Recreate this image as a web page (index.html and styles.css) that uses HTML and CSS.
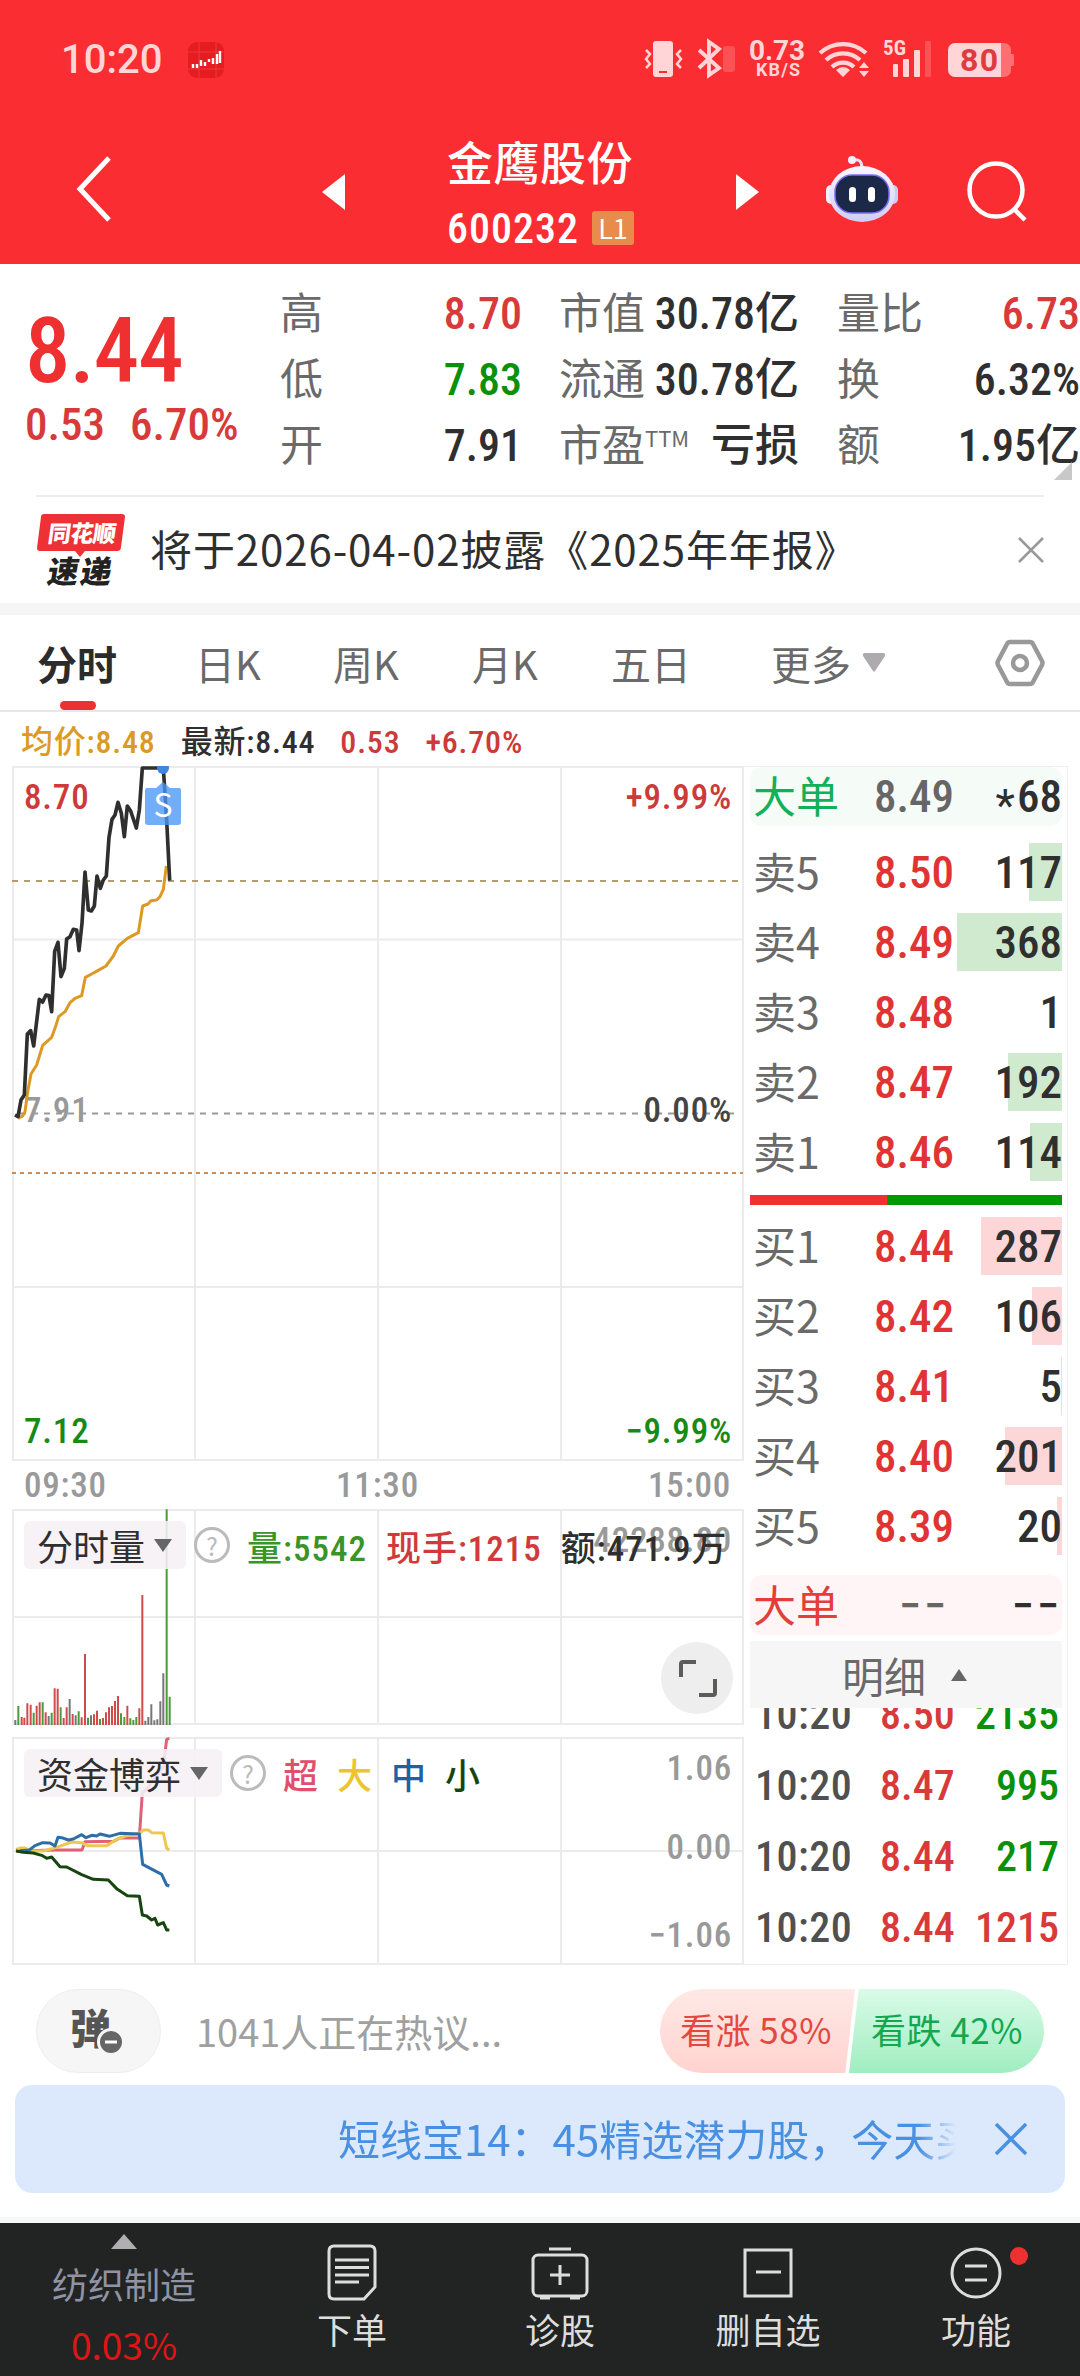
FILE: index.html
```html
<!DOCTYPE html>
<html lang="zh-CN">
<head>
    <title>金鹰股份 600232</title>
    <meta charset="UTF-8">
    <link rel="stylesheet" href="styles.css">
</head>
<body>

    <header>
        <div class="status">
            <span class="clock">10:20</span>
            <svg class="app-icon" width="36" height="36" viewBox="0 0 36 36">
                <rect width="36" height="36" rx="9" fill="#e51c20"/>
                <path d="M0 10H36M0 27H36M11 0V36M28 0V36" stroke="#ee3a3c" stroke-width="1"/>
                <path d="M5 22v4M9 22v4M13 18v6M17 20v4M21 17v3M25 16v6M29 12v10M32 9v12" stroke="#fff" stroke-width="2.4"/>
            </svg>
            <svg class="status-icons" width="380" height="46" viewBox="640 36 380 46" fill="#ffd5d7">
                <rect x="653" y="41" width="20" height="36" rx="3"/>
                <rect x="659" y="71" width="8" height="2" fill="#fa2d32"/>
                <path d="M646 50l4 4-4 5 4 5-4 4M681 50l-4 4 4 5-4 5 4 4" fill="none" stroke="#ffd5d7" stroke-width="2.5"/>
                <path d="M699 50l20 18-10 7V42l10 7-20 19" fill="none" stroke="#ffd5d7" stroke-width="3.8"/>
                <rect x="723" y="46" width="12" height="26" rx="3" opacity=".22"/>
                <text x="749" y="60" class="speed" textLength="56">0.73</text>
                <text x="756" y="76" class="unit" textLength="44">KB/S</text>
                <g fill="none" stroke="#ffd5d7" stroke-width="4.2">
                    <path d="M820 53a34 34 0 0 1 46 0"/>
                    <path d="M826 60a25 25 0 0 1 34 0"/>
                    <path d="M832 67a16 16 0 0 1 22 0"/>
                </g>
                <path d="M836 70q7-6 14 0l-7 7zM859 68l5-6 5 6zM859 71h10l-5 6z"/>
                <text x="883" y="55" class="net" textLength="23">5G</text>
                <rect x="893" y="64" width="5" height="13" rx="1"/>
                <rect x="903" y="59" width="6" height="18" rx="1"/>
                <rect x="914" y="50" width="6" height="27" rx="1"/>
                <rect x="925" y="41" width="6" height="36" rx="1" opacity=".22"/>
                <path d="M955 43h46v34h-46a7 7 0 0 1-7-7V50a7 7 0 0 1 7-7z"/>
                <path d="M1001 43h3a7 7 0 0 1 7 7v4h2q1 0 1 2v8q0 2-1 2h-2v4a7 7 0 0 1-7 7h-3z" opacity=".4"/>
                <text x="960" y="71" class="battery" textLength="38">80</text>
            </svg>
        </div>
        <div class="titlebar">
            <svg class="back" width="36" height="66" viewBox="0 0 36 66"><path d="M33 2L4 33l29 31" fill="none" stroke="#fff" stroke-width="5"/></svg>
            <svg class="prev" width="23" height="36" viewBox="0 0 23 36"><path d="M23 0v36L0 18z" fill="#fff"/></svg>
            <div class="stock">
                <div class="name">金鹰股份</div>
                <div class="code">600232 <span class="level">L1</span></div>
            </div>
            <svg class="next" width="23" height="36" viewBox="0 0 23 36"><path d="M0 0v36l23-18z" fill="#fff"/></svg>
            <svg class="robot" width="72" height="68" viewBox="825 155 72 68">
                <defs>
                    <linearGradient id="shell" x1="0" y1="0" x2="0" y2="1"><stop offset="0" stop-color="#fbf8ff"/><stop offset="1" stop-color="#cfcdf6"/></linearGradient>
                </defs>
                <path d="M852 160q9-2 9 8" fill="none" stroke="#eadff5" stroke-width="3"/>
                <circle cx="851" cy="160" r="4" fill="#f6eefc"/>
                <rect x="825" y="185" width="12" height="19" rx="5" fill="#f3f0ff"/>
                <rect x="885" y="185" width="12" height="19" rx="5" fill="#c9cdf6"/>
                <ellipse cx="861" cy="194" rx="33" ry="28" fill="url(#shell)"/>
                <rect x="834" y="175" width="54" height="38" rx="17" fill="#1c2848" stroke="#7a6df0" stroke-width="1.5"/>
                <rect x="848" y="187" width="7" height="15" rx="3.5" fill="#fff"/>
                <rect x="867" y="187" width="7" height="15" rx="3.5" fill="#fff"/>
            </svg>
            <svg class="search" width="62" height="62" viewBox="964 160 62 62"><circle cx="995" cy="190" r="26.5" fill="none" stroke="#fff" stroke-width="4.5"/><path d="M1013 209l11 11" stroke="#fff" stroke-width="4.5"/></svg>
        </div>
    </header>

    <section class="quote">
        <div class="last">
            <div class="price">8.44</div>
            <div class="change"><span>0.53</span><span>6.70%</span></div>
        </div>
        <dl class="col c1">
            <dt>高</dt><dd class="up">8.70</dd>
            <dt>低</dt><dd class="down">7.83</dd>
            <dt>开</dt><dd>7.91</dd>
        </dl>
        <dl class="col c2">
            <dt>市值</dt><dd>30.78亿</dd>
            <dt>流通</dt><dd>30.78亿</dd>
            <dt>市盈<sup>TTM</sup></dt><dd>亏损</dd>
        </dl>
        <dl class="col c3">
            <dt>量比</dt><dd class="up">6.73</dd>
            <dt>换</dt><dd>6.32%</dd>
            <dt>额</dt><dd>1.95亿</dd>
        </dl>
        <i class="corner"></i>
    </section>

    <section class="news">
        <svg width="90" height="74" viewBox="36 512 90 74">
            <path d="M44 513h78q3 0 3 3l-4 30q0 4-4 4H85l-5 6-5-6H40q-3 0-3-3l4-31q0-3 3-3z" fill="#ee3135"/>
            <text x="0" y="0" class="brand" transform="translate(47 541) skewX(-8)" textLength="68">同花顺</text>
            <text x="0" y="0" class="express" transform="translate(46 582) skewX(-10)" textLength="64">速递</text>
        </svg>
        <p>将于2026-04-02披露《2025年年报》</p>
        <svg width="26" height="26" viewBox="0 0 26 26"><path d="M1 1l24 24M25 1L1 25" stroke="#999" stroke-width="2.5"/></svg>
    </section>

    <nav class="tabs">
        <a class="active">分时</a>
        <a>日K</a>
        <a>周K</a>
        <a>月K</a>
        <a>五日</a>
        <a>更多</a>
        <svg class="more" width="24" height="19" viewBox="0 0 24 19"><path d="M2 0h20q2 1 1 3L13 18q-1 1-2 0L1 3q-1-2 1-3z" fill="#aeaaae"/></svg>
        <svg class="gear" width="50" height="48" viewBox="0 0 50 48" fill="none" stroke="#999" stroke-width="4.5"><path d="M15 3h20q2 0 3 2l9 17q1 2 0 4l-9 17q-1 2-3 2H15q-2 0-3-2L3 26q-1-2 0-4l9-17q1-2 3-2z"/><circle cx="25" cy="24" r="7"/></svg>
    </nav>

    <div class="summary">
        <span class="avg">均价:8.48</span>
        <span>最新:8.44</span>
        <span class="rise">0.53</span>
        <span class="rise">+6.70%</span>
    </div>

    <main>
        <div class="charts">
            <!-- price -->
            <svg class="chart" width="744" height="695" viewBox="0 766 744 695">
                <path class="grid" d="M12 767H743M12 939.5H743M12 1287H743M12 1460H743M13 766V1461M195 766V1461M378 766V1461M561 766V1461M743 766V1461"/>
                <path d="M12 881H738" stroke="#b79c70" stroke-width="2" stroke-dasharray="6 6"/>
                <path d="M20 1113.500H738" stroke="#999" stroke-width="2" stroke-dasharray="6 6"/>
                <path d="M12 1173H743" stroke="#d98a4a" stroke-width="2" stroke-dasharray="4 4"/>
                <text x="24" y="1122" class="axis">7.91</text>
                <g transform="translate(0 750) scale(.33333)" fill="none" stroke-linejoin="round">
                    <polyline stroke="#dc9a24" stroke-width="9" points="54,1105 68,1098 75,1085 84,1020 93,972 110,945 128,886 155,862 165,835 176,800 195,785 210,758 225,745 245,737 256,682 275,672 300,658 318,648 340,618 355,588 382,565 415,548 428,468 444,462 453,452 470,450 480,440 490,418 499,348"/>
                    <polyline stroke="#2f2f2f" stroke-width="11" points="45,1095 54,1100 63,1050 73,1035 82,852 92,842 101,888 118,748 128,756 138,735 147,737 155,785 164,604 174,577 183,680 193,655 200,567 210,560 220,538 230,540 237,602 246,520 255,366 265,480 274,483 283,468 291,378 301,415 310,390 319,378 327,262 336,208 345,195 354,157 364,190 373,260 382,168 392,183 409,234 418,180 427,54 490,54 500,210 509,392"/>
                </g>
                <circle cx="163" cy="768" r="6" fill="#3f86e0"/>
                <path d="M147 788h9l7-6 7 6h9q2 0 2 2v32q0 3-3 3h-30q-3 0-3-3v-32q0-2 2-2z" fill="#4a96f5" opacity=".78"/>
                <text x="163" y="817" class="sell">S</text>
                <text x="24" y="809" class="axis red">8.70</text>
                <text x="24" y="1443" class="axis green">7.12</text>
                <text x="732" y="809" class="axis red end">+9.99%</text>
                <text x="732" y="1122" class="axis dark end">0.00%</text>
                <text x="732" y="1443" class="axis green end">−9.99%</text>
            </svg>
            <div class="times"><span>09:30</span><span>11:30</span><span>15:00</span></div>

            <!-- volume -->
            <div class="pane">
                <svg class="chart" width="744" height="216" viewBox="0 1509 744 216">
                    <path class="grid" d="M12 1510H743M12 1617H743M12 1724H743M13 1509V1725M195 1509V1725M378 1509V1725M561 1509V1725M743 1509V1725"/>
                    <g transform="translate(0 1480) scale(.33333)" stroke-width="6">
                        <path stroke="#777" d="M46 735V720M146 735V708M209 735V657M227 735V706M273 735V706M436 735V722M445 735V711M454 735V673M463 735V721M472 735V718M481 735V664M490 735V580"/>
                        <path stroke="#4c9a3c" d="M55 735V678M101 735V698M128 735V667M155 735V698M182 735V682M236 735V694M264 735V713M300 735V717M363 735V700M373 735V711M391 735V715M400 735V720M409 735V711M500 735V88M509 735V650"/>
                        <path stroke="#cf4c4c" d="M65 735V711M73 735V713M82 735V670M92 735V674M110 735V677M119 735V667M137 735V697M164 735V625M173 735V626M191 735V714M200 735V682M218 735V702M245 735V712M255 735V522M282 735V703M291 735V692M309 735V714M318 735V697M327 735V682M336 735V678M345 735V663M354 735V648M382 735V677M418 735V685M427 735V345"/>
                    </g>
                    <text x="732" y="1552" class="axis end">42288.80</text>
                </svg>
                <div class="legend">
                    <span class="pick">分时量<i></i></span>
                    <span class="help">?</span>
                    <span class="vol">量:5542</span>
                    <span class="hand">现手:1215</span>
                    <span class="amount">额:471.9万</span>
                </div>
                <svg class="full" width="72" height="72" viewBox="0 0 72 72"><circle cx="36" cy="36" r="36" fill="#eee"/><path d="M20 35V22q0-2 2-2h13M54 37v14q0 2-2 2H38" fill="none" stroke="#5c5c58" stroke-width="4"/></svg>
            </div>

            <!-- money flow -->
            <div class="pane flow">
                <svg class="chart" width="744" height="228" viewBox="0 1737 744 228">
                    <path class="grid" d="M12 1738H743M12 1851H743M12 1964H743M13 1737V1965M195 1737V1965M378 1737V1965M561 1737V1965M743 1737V1965"/>
                    <g transform="translate(0 1480) scale(.33333)" fill="none" stroke-width="9" stroke-linejoin="round">
                        <polyline stroke="#e0607a" points="48,1108 90,1112 160,1110 246,1110 255,1085 340,1084 360,1074 418,1074 427,938 445,922 490,860 500,778 508,775"/>
                        <polyline stroke="#ecc94e" points="48,1110 60,1104 75,1104 90,1112 130,1113 170,1102 215,1086 245,1088 262,1097 320,1097 350,1078 380,1067 418,1060 430,1050 445,1050 455,1058 490,1059 500,1105 508,1110"/>
                        <polyline stroke="#2e6da8" points="60,1112 88,1110 105,1097 128,1088 150,1089 165,1098 174,1072 185,1073 205,1080 220,1077 245,1064 258,1073 275,1066 290,1068 300,1062 328,1069 360,1060 418,1062 428,1153 485,1183 500,1215 508,1218"/>
                        <polyline stroke="#16450f" points="48,1113 70,1117 100,1119 125,1126 140,1135 155,1131 180,1160 200,1161 245,1184 280,1198 325,1200 350,1226 382,1247 418,1249 427,1305 440,1308 455,1320 465,1315 473,1335 490,1328 500,1350 508,1350"/>
                    </g>
                    <text x="732" y="1780" class="axis end">1.06</text>
                    <text x="732" y="1859" class="axis end">0.00</text>
                    <text x="732" y="1947" class="axis end">−1.06</text>
                </svg>
                <div class="legend">
                    <span class="pick">资金博弈<i></i></span>
                    <span class="help">?</span>
                    <span class="xl">超</span>
                    <span class="l">大</span>
                    <span class="m">中</span>
                    <span class="s">小</span>
                </div>
            </div>
        </div>

        <aside class="book">
            <div class="big sell-side"><b>大单</b><em>8.49</em><span><i class="star">*</i>68</span></div>
            <ul>
                <li><b>卖5</b><em>8.50</em><span>117</span><i class="bar" style="width:33px"></i></li>
                <li><b>卖4</b><em>8.49</em><span>368</span><i class="bar" style="width:105px"></i></li>
                <li><b>卖3</b><em>8.48</em><span>1</span></li>
                <li><b>卖2</b><em>8.47</em><span>192</span><i class="bar" style="width:54px"></i></li>
                <li><b>卖1</b><em>8.46</em><span>114</span><i class="bar" style="width:32px"></i></li>
            </ul>
            <div class="ratio"></div>
            <ul class="bids">
                <li><b>买1</b><em>8.44</em><span>287</span><i class="bar" style="width:81px"></i></li>
                <li><b>买2</b><em>8.42</em><span>106</span><i class="bar" style="width:30px"></i></li>
                <li><b>买3</b><em>8.41</em><span>5</span><i class="bar" style="width:1px"></i></li>
                <li><b>买4</b><em>8.40</em><span>201</span><i class="bar" style="width:57px"></i></li>
                <li><b>买5</b><em>8.39</em><span>20</span><i class="bar" style="width:5px"></i></li>
            </ul>
            <div class="big buy-side"><b>大单</b><em>−−</em><span>−−</span></div>
            <div class="detail">明细<i></i></div>
            <div class="ticks">
                <div><b>10:20</b><em>8.50</em><span>2135</span></div>
                <div><b>10:20</b><em>8.47</em><span>995</span></div>
                <div><b>10:20</b><em>8.44</em><span>217</span></div>
                <div><b>10:20</b><em>8.44</em><span class="buy">1215</span></div>
            </div>
        </aside>
    </main>

    <section class="talk">
        <div class="danmu">弹<svg width="28" height="28" viewBox="0 0 28 28"><circle cx="14" cy="14" r="12.500" fill="#666" stroke="#f6f6f6" stroke-width="3"/><path d="M8 14h12" stroke="#fff" stroke-width="3"/></svg></div>
        <p>1041人正在热议...</p>
        <div class="vote"><span class="bull">看涨 58%</span><span class="bear">看跌 42%</span></div>
    </section>

    <section class="banner">
        <p>短线宝14：45精选潜力股，今天买</p>
        <svg width="32" height="32" viewBox="0 0 32 32"><path d="M1 1l30 30M31 1L1 31" stroke="#4a90e2" stroke-width="3.500"/></svg>
    </section>

    <footer>
        <div class="industry"><i></i><span>纺织制造</span><em>0.03%</em></div>
        <a><svg width="60" height="60" viewBox="0 0 60 60" fill="none" stroke="#ddd" stroke-width="3"><path d="M12 3h36q5 0 5 5v36L42 56H12q-5 0-5-5V8q0-5 5-5z"/><path d="M13 17h34M13 24.500h34M13 32h34M13 39h24"/></svg>下单</a>
        <a><svg width="60" height="60" viewBox="0 0 60 60" fill="none" stroke="#ddd" stroke-width="3"><rect x="3" y="12" width="54" height="41" rx="5"/><path d="M30 22v20M20 32h20M19 6h22M10 55h10M40 55h10"/></svg>诊股</a>
        <a><svg width="60" height="60" viewBox="0 0 60 60" fill="none" stroke="#ddd" stroke-width="3"><rect x="7" y="7" width="46" height="46"/><path d="M18 29h25"/></svg>删自选</a>
        <a><svg width="60" height="60" viewBox="0 0 60 60" fill="none" stroke="#ddd" stroke-width="3"><circle cx="30" cy="30" r="24"/><path d="M19 23h22M19 37h22"/></svg>功能<i class="dot"></i></a>
    </footer>

</body>
</html>
```
FILE: styles.css
```css
* {
    box-sizing: border-box;
}

body {
    margin: 0;
    width: 1080px;
    height: 2376px;
    overflow: hidden;
    background: #fff;
    color: #2f2f2f;
    font-family: "Roboto Condensed", "Noto Sans CJK SC", sans-serif;
}

svg {
    display: block;
    flex: none;
}

ul, dl, dd, p {
    margin: 0;
    padding: 0;
    list-style: none;
}

b, em, i {
    font-weight: normal;
    font-style: normal;
}

header {
    height: 264px;
    background: #fa2d32;
    color: #fff;
}

.status {
    display: flex;
    align-items: center;
    height: 118px;
    padding-left: 61px;
}

.clock {
    width: 127px;
    color: #ffd5d7;
    font: 500 40px Roboto, sans-serif;
}

.app-icon {
    margin-top: 2px;
}

.status-icons {
    margin-left: 416px;
}

.status-icons text {
    font-family: Roboto, sans-serif;
    font-weight: 700;
}

.speed { font-size: 28px; }
.unit { font-size: 18px; }
.status-icons .net { font-size: 21px; font-family: "Roboto Condensed", sans-serif; }
.battery { font-size: 32px; fill: #e03a40; }

.titlebar {
    display: flex;
    align-items: flex-start;
    height: 146px;
    padding-left: 76px;
}

.back { margin-top: 38px; }
.prev { margin: 56px 0 0 210px; }

.stock {
    width: 190px;
    margin: 19px 100px 0 101px;
    padding-left: 1px;
    font-weight: 500;
    white-space: nowrap;
}

.name {
    font-size: 46px;
    line-height: 54px;
    letter-spacing: .5px;
}

.code {
    display: flex;
    align-items: center;
    height: 74px;
    font-size: 42px;
    letter-spacing: 1px;
}

.level {
    width: 42px;
    height: 34px;
    margin-left: 13px;
    border-radius: 3px;
    background: #e88c4c;
    font: 400 27px/33px "Noto Sans CJK SC", sans-serif;
    letter-spacing: 0;
    text-align: center;
}

.next { margin-top: 56px; }
.robot { margin: 37px 0 0 67px; }
.search { margin: 42px 0 0 67px; }

.quote {
    position: relative;
    display: flex;
    height: 231px;
    padding-top: 17px;
}

.last {
    width: 280px;
    padding-left: 25px;
    color: #ee3030;
}

.price {
    margin-top: 16px;
    font-size: 91px;
    font-weight: 500;
    line-height: 108px;
    letter-spacing: -1px;
}

.change {
    display: flex;
    gap: 25px;
    color: #d83a3a;
    font-size: 45px;
    font-weight: 500;
    line-height: 40px;
}

.col {
    display: grid;
    grid-template-columns: 84px 1fr;
    grid-auto-rows: 66px;
    line-height: 66px;
    white-space: nowrap;
    font-size: 43px;
}

.c1 { width: 242px; }
.c2 { width: 240px; margin-left: 37px; }
.c3 { width: 243px; margin-left: 38px; }

.col dt { color: #6a6a6a; }

.col dd {
    text-align: right;
    font-size: 44px;
    font-weight: 500;
}

.col sup {
    font: 400 22px/1 "Noto Sans CJK SC", sans-serif;
    vertical-align: 14px;
}

.up { color: #d83a3a; }
.down { color: #0a900a; }

.corner {
    position: absolute;
    right: 8px;
    bottom: 15px;
    border-left: 18px solid transparent;
    border-bottom: 18px solid #c8c8c8;
}

.news {
    display: flex;
    align-items: center;
    height: 108px;
    margin: 0 36px;
    border-top: 2px solid #eee;
}

.news p {
    flex: 1;
    margin: -5px 0 0 24px;
    font: 400 42px/60px "Noto Sans CJK SC", sans-serif;
    letter-spacing: .9px;
    white-space: nowrap;
}

.brand {
    fill: #fff;
    font: 900 23px "Noto Sans CJK SC", sans-serif;
}

.express {
    fill: #222;
    font: 900 31px "Noto Sans CJK SC", sans-serif;
}

.tabs {
    position: relative;
    display: flex;
    align-items: center;
    height: 109px;
    padding: 0 35px 0 37px;
    border-top: 12px solid #f5f5f5;
    border-bottom: 2px solid #e8e8e8;
    color: #6a6a6a;
    font: 400 40px/60px "Noto Sans CJK SC", sans-serif;
}

.tabs a {
    width: 139px;
}

.tabs a:nth-child(2) { width: 138px; }
.tabs a:nth-child(5) { width: 160px; }
.tabs a:nth-child(6) { width: 91px; }

.tabs .active {
    position: relative;
    width: 158px;
    color: #2b2b2b;
    font-weight: 700;
}

.active::after {
    content: "";
    position: absolute;
    left: 23px;
    bottom: -17px;
    width: 36px;
    height: 9px;
    border-radius: 5px;
    background: #ee3030;
}

.gear { margin-left: auto; }

.summary {
    display: flex;
    gap: 25px;
    height: 54px;
    padding-left: 21px;
    font-size: 32px;
    font-weight: 500;
    line-height: 60px;
    letter-spacing: .8px;
}

.avg { color: #dc9a24; }
.rise { color: #cc3a3a; }

main {
    display: flex;
    height: 1199px;
}

.charts { width: 744px; }

.grid {
    fill: none;
    stroke: #ebebeb;
    stroke-width: 2;
}

.axis {
    fill: #999;
    font-size: 35px;
    font-weight: 500;
    letter-spacing: .8px;
}

.red { fill: #cc3a3a; }
.green { fill: #178a17; }
.dark { fill: #444; }
.end { text-anchor: end; }

.sell {
    fill: #fff;
    font: 400 32px "Noto Sans CJK SC", sans-serif;
    text-anchor: middle;
}

.times {
    display: flex;
    justify-content: space-between;
    height: 48px;
    padding: 0 13px 0 24px;
    color: #999;
    font-size: 35px;
    font-weight: 500;
    line-height: 50px;
    letter-spacing: .8px;
}

.pane { position: relative; }
.flow { margin-top: 12px; }

.legend {
    position: absolute;
    top: 12px;
    left: 24px;
    display: flex;
    align-items: center;
    height: 48px;
    font-size: 35px;
    font-weight: 500;
    white-space: nowrap;
}

.pick {
    display: flex;
    align-items: center;
    height: 48px;
    padding: 0 14px 0 13px;
    border-radius: 6px;
    background: rgba(245, 240, 245, .88);
    font-size: 36px;
    font-weight: 400;
}

.pick i {
    margin-left: 9px;
    border: 9px solid transparent;
    border-top: 13px solid #666;
    border-bottom: 0;
}

.help {
    width: 36px;
    height: 36px;
    margin: 0 17px 0 8px;
    border: 3px solid #bbb;
    border-radius: 50%;
    color: #bbb;
    font: 400 25px/30px "Noto Sans CJK SC", sans-serif;
    text-align: center;
}

.vol, .hand, .amount { letter-spacing: 1px; }
.vol { color: #3a9428; }
.hand { margin: 0 19px; color: #d03a3a; }
.flow .legend span { margin-right: 19px; }
.flow .legend .help { margin-right: 17px; }
.flow .legend .pick { margin-right: 0; }
.xl { color: #e0506c; }
.l { color: #ecc52e; }
.m { color: #1d62a8; }
.s { color: #16450f; }

.full {
    position: absolute;
    left: 661px;
    top: 133px;
}

.book {
    width: 324px;
    padding: 0 5px 0 6px;
    border: solid #eee;
    border-width: 1px 1px 1px 0;
}

.big, .book li {
    display: flex;
    align-items: center;
    position: relative;
    font-size: 45px;
    font-weight: 500;
}

.big {
    height: 59px;
    border-radius: 12px;
}

.book b {
    width: 124px;
    padding: 0 0 5px 3px;
    color: #6a6a6a;
    font: 400 43px/54px "Noto Sans CJK SC", sans-serif;
}

.book em {
    position: relative;
    font-weight: 500;
}

.book span {
    margin-left: auto;
    position: relative;
    z-index: 1;
}

.book li {
    height: 70px;
    color: #2f2f2f;
}

.book li em { color: #e03434; }

.star {
    position: relative;
    top: 9px;
    margin-right: 2px;
}

.bar {
    position: absolute;
    right: 0;
    top: 6px;
    height: 58px;
    background: #cfeacf;
}

.bids .bar { background: #fdd6d8; }

.sell-side { background: #f5fbf7; }
.sell-side em { color: #666; }
.sell-side b { color: #12b058; }

.book ul { padding-top: 11px; }

.ratio {
    height: 10px;
    margin-top: 8px;
    background: linear-gradient(to right, #ee3030 137px, #009900 137px);
}

.book .bids { padding-top: 6px; }

.buy-side {
    height: 60px;
    margin-top: 14px;
    background: #fff5f6;
    letter-spacing: 3px;
}

.book .buy-side b { color: #e23f38; letter-spacing: 0; }
.buy-side em { padding-left: 25px; color: #666; }

.detail {
    display: flex;
    align-items: center;
    justify-content: center;
    height: 67px;
    padding-right: 3px;
    margin-top: 6px;
    background: #f6f6f6;
    color: #6a6a6a;
    font-size: 42px;
}

.detail i {
    margin-left: 25px;
    border: 8px solid transparent;
    border-top: 0;
    border-bottom: 12px solid #666;
}

.ticks {
    height: 256px;
    overflow: hidden;
}

.ticks div {
    display: flex;
    align-items: center;
    height: 71px;
    padding-right: 3px;
    font-size: 42px;
    font-weight: 500;
}

.ticks div:first-child { margin-top: -29px; }

.ticks b {
    width: 130px;
    padding: 0 0 0 5px;
    color: #505050;
    font: 500 42px "Roboto Condensed", sans-serif;
    letter-spacing: .5px;
}

.ticks em { color: #d83a3a; }
.ticks span { color: #0a900a; }
.ticks .buy { color: #d83a3a; }

.talk {
    display: flex;
    align-items: center;
    height: 84px;
    margin: 24px 36px 12px;
    font-family: "Noto Sans CJK SC", sans-serif;
}

.danmu {
    position: relative;
    width: 125px;
    height: 84px;
    border: 1px solid #eee;
    border-radius: 42px;
    background: #f6f6f6;
    color: #555;
    font-size: 41px;
    font-weight: 900;
    line-height: 72px;
    padding-left: 33px;
}

.danmu svg {
    position: absolute;
    left: 60px;
    top: 38px;
}

.talk p {
    margin: -2px 0 0 35px;
    color: #a0a0a0;
    font-size: 38px;
    font-weight: 400;
}

.vote {
    display: flex;
    width: 384px;
    height: 84px;
    margin-left: auto;
    border-radius: 42px;
    overflow: hidden;
    font-size: 35px;
    line-height: 80px;
    letter-spacing: .5px;
}

.vote span { width: 195px; }

.bull {
    padding-left: 20px;
    background: linear-gradient(#ffe9e6, #ffd3cf);
    clip-path: polygon(0 0, 100% 0, 95% 100%, 0 100%);
    color: #e2493e;
}

.bear {
    margin-left: -6px;
    padding-left: 22px;
    background: linear-gradient(#dafbe8, #a0edc0);
    clip-path: polygon(5% 0, 100% 0, 100% 100%, 0 100%);
    color: #12a850;
}

.banner {
    display: flex;
    align-items: center;
    height: 108px;
    margin: 0 15px 24px;
    padding: 0 38px 0 323px;
    border-radius: 17px;
    background: #dce9fd;
    color: #4a90e2;
    font: 400 42px/60px "Noto Sans CJK SC", sans-serif;
}

.banner p {
    width: 618px;
    margin: -2px auto 0 0;
    overflow: hidden;
    white-space: nowrap;
    -webkit-mask-image: linear-gradient(to right, #000 94%, transparent);
    mask-image: linear-gradient(to right, #000 94%, transparent);
}

footer {
    display: grid;
    grid-template-columns: 248px repeat(4, 208px);
    height: 159px;
    border-top: 6px solid #f6f8f8;
    background: #212423;
    color: #ddd;
    font: 400 35px/50px "Noto Sans CJK SC", sans-serif;
    text-align: center;
}

.industry {
    display: flex;
    flex-direction: column;
    align-items: center;
    font-size: 36px;
    color: #8f93a3;
}

.industry i {
    margin: 11px 0 9px;
    border: 13px solid transparent;
    border-top: 0;
    border-bottom: 15px solid #b0aeb2;
}

.industry em {
    margin-top: 11px;
    color: #e01414;
    font-size: 37px;
}

footer a {
    position: relative;
    display: flex;
    flex-direction: column;
    align-items: center;
    padding-top: 20px;
}

footer a svg { margin-bottom: 1px; }

.dot {
    position: absolute;
    left: 138px;
    top: 24px;
    width: 18px;
    height: 18px;
    border-radius: 50%;
    background: #ee3030;
}
```
